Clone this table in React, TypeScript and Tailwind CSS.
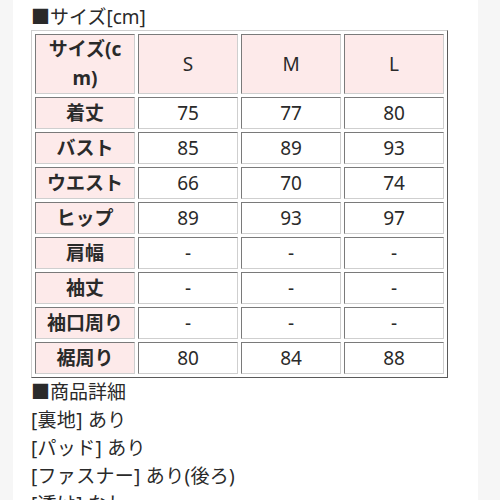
import React from "react"

const rows: [string, string, string, string][] = [
	["着丈", "75", "77", "80"],
	["バスト", "85", "89", "93"],
	["ウエスト", "66", "70", "74"],
	["ヒップ", "89", "93", "97"],
	["肩幅", "-", "-", "-"],
	["袖丈", "-", "-", "-"],
	["袖口周り", "-", "-", "-"],
	["裾周り", "80", "84", "88"],
]

const details = ["[裏地] あり", "[パッド] あり", "[ファスナー] あり(後ろ)", "[透け] なし"]

const cell =
	"w-[100px] px-[2px] py-0 text-center align-middle border border-t-[#7a7a7a] border-l-[#7a7a7a] border-b-[#cfcfcf] border-r-[#cfcfcf]"

export default function App() {
	return (
		<div
			className="flex h-[500px] w-[500px] overflow-hidden bg-[#f6f6f6] text-[19px] text-[#2a2a2a]"
			style={{ fontFamily: '"Noto Sans", "Noto Sans CJK JP", sans-serif' }}
		>
			<div className="w-[13px] shrink-0" />
			<div className="w-[465px] shrink-0 bg-white pl-[18px] pt-[3px]">
				<div className="leading-[28px]">■サイズ[cm]</div>
				<table className="border-separate border-spacing-[3px] border border-t-[#cfcfcf] border-l-[#cfcfcf] border-b-[#5a5a5a] border-r-[#5a5a5a] -mt-[1px]">
					<tbody>
						<tr className="h-[60px]">
							<td className={`${cell} bg-[#fdeaea] font-bold leading-[29px] break-all`}>サイズ(cm)</td>
							<td className={`${cell} bg-[#fdeaea]`}>S</td>
							<td className={`${cell} bg-[#fdeaea]`}>M</td>
							<td className={`${cell} bg-[#fdeaea]`}>L</td>
						</tr>
						{rows.map((r) => (
							<tr key={r[0]} className="h-[32px] leading-[29px]">
								<td className={`${cell} bg-[#fdeaea] font-bold whitespace-nowrap`}>{r[0]}</td>
								<td className={cell}>{r[1]}</td>
								<td className={cell}>{r[2]}</td>
								<td className={cell}>{r[3]}</td>
							</tr>
						))}
					</tbody>
				</table>
				<div className="leading-[28px]">
					<div>■商品詳細</div>
					{details.map((d) => (
						<div key={d} className="tracking-[0.3px]">
							{d}
						</div>
					))}
				</div>
			</div>
		</div>
	)
}
